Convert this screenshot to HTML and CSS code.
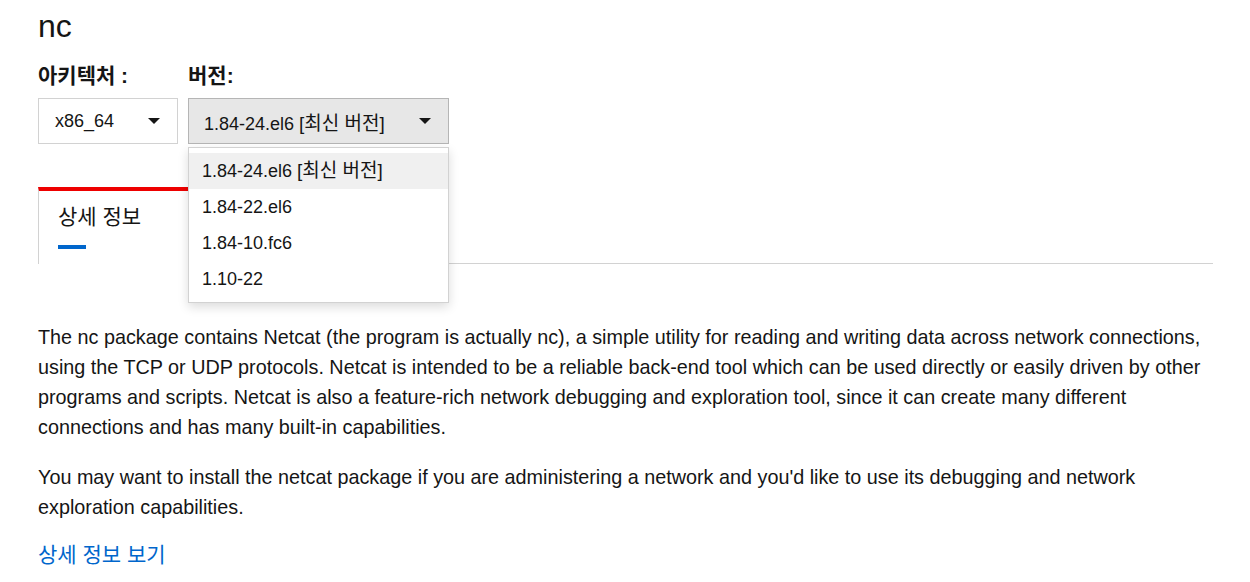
FILE: index.html
```html
<!DOCTYPE html>
<html lang="ko">
<head>
  <meta charset="UTF-8">
  <title>nc</title>
  <link rel="stylesheet" href="styles.css">
</head>
<body>

  <main class="page">
    <h1 class="title">nc</h1>

    <!-- 선택 -->
    <div class="pickers">
      <div class="field">
        <label class="field-label">아키텍처 :</label>
        <div class="select select-arch">
          <span>x86_64</span>
          <span class="caret"></span>
        </div>
      </div>
      <div class="field field-version">
        <label class="field-label">버전:</label>
        <div class="select select-version">
          <span>1.84-24.el6 <span class="ko">[최신 버전]</span></span>
          <span class="caret"></span>
        </div>
        <ul class="menu">
          <li class="menu-item active">1.84-24.el6 <span class="ko">[최신 버전]</span></li>
          <li class="menu-item">1.84-22.el6</li>
          <li class="menu-item">1.84-10.fc6</li>
          <li class="menu-item">1.10-22</li>
        </ul>
      </div>
    </div>

    <!-- 탭 -->
    <div class="tabs">
      <div class="tab current">
        <span class="tab-text">상세 정보</span>
        <span class="tab-bar"></span>
      </div>
      <div class="tab-rest"></div>
    </div>

    <div class="tab-body">
      <p>The nc package contains Netcat (the program is actually nc), a simple utility for reading and writing data across network connections, using the TCP or UDP protocols. Netcat is intended to be a reliable back-end tool which can be used directly or easily driven by other programs and scripts. Netcat is also a feature-rich network debugging and exploration tool, since it can create many different connections and has many built-in capabilities.</p>
      <p class="last">You may want to install the netcat package if you are administering a network and you'd like to use its debugging and network exploration capabilities.</p>
      <a class="more" href="#">상세 정보 보기</a>
    </div>
  </main>

</body>
</html>
```

FILE: styles.css
```css
body {
  margin: 0;
  font-family: "Liberation Sans", "Noto Sans CJK KR", sans-serif;
  color: #151515;
  background: #fff;
}
.page {
  padding: 6px 37px 0 38px;
}
.title {
  margin: 0;
  font-size: 32px;
  font-weight: normal;
  line-height: 40px;
}
.pickers {
  display: flex;
  gap: 10px;
  margin-top: 18px;
}
.field {
  display: flex;
  flex-direction: column;
  gap: 10px;
}
.field-version {
  position: relative;
}
.field-label {
  font-size: 21px;
  font-weight: bold;
  line-height: 24px;
}
.ko {
  font-size: 19px;
}
.select {
  box-sizing: border-box;
  height: 46px;
  display: flex;
  align-items: center;
  justify-content: space-between;
  padding: 0 17px 0 16px;
  font-size: 18px;
  border: 1px solid #d2d2d2;
  background: #fff;
}
.select-arch {
  width: 140px;
}
.select-version {
  width: 261px;
  padding-left: 15px;
  background: #e7e7e7;
  border-color: #b5b5b5;
}
.caret {
  width: 0;
  height: 0;
  border-left: 6px solid transparent;
  border-right: 6px solid transparent;
  border-top: 6px solid #151515;
}
.menu {
  position: absolute;
  top: calc(100% + 3px);
  left: 0;
  box-sizing: border-box;
  width: 261px;
  margin: 0;
  padding: 5px 0;
  list-style: none;
  background: #fff;
  border: 1px solid #d2d2d2;
  box-shadow: 0 4px 10px rgba(0, 0, 0, 0.14);
  z-index: 2;
}
.menu-item {
  height: 36px;
  line-height: 36px;
  padding: 0 13px;
  font-size: 18px;
}
.menu-item.active {
  background: #f0f0f0;
}
.tabs {
  display: flex;
  margin-top: 43px;
}
.tab {
  display: flex;
  flex-direction: column;
  width: 170px;
  box-sizing: border-box;
  padding: 13px 20px 15px 19px;
  border-top: 4px solid #ee0000;
  border-left: 1px solid #d2d2d2;
}
.tab-text {
  font-size: 21px;
  line-height: 26px;
}
.tab-bar {
  width: 28px;
  height: 4px;
  margin-top: 15px;
  background: #0066cc;
}
.tab-rest {
  flex: 1;
  border-bottom: 1px solid #d2d2d2;
}
.tab-body {
  padding-top: 58px;
}
.tab-body p {
  margin: 0 0 20px;
  font-size: 19.8px;
  line-height: 30px;
}
.tab-body p.last {
  margin-bottom: 18px;
}
.more {
  font-size: 21px;
  line-height: 30px;
  color: #0066cc;
  text-decoration: none;
}
```
